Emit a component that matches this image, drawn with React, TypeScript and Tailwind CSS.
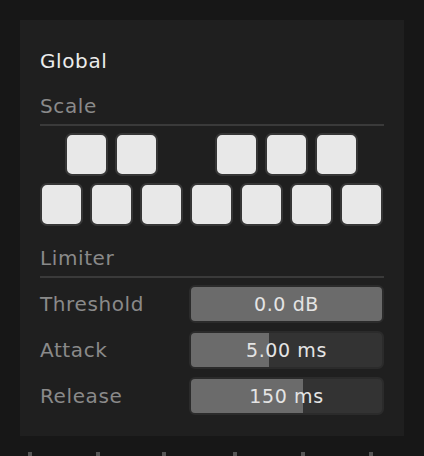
import React from "react"

const font = { fontFamily: '"DejaVu Sans", "Liberation Sans", sans-serif' }

function Key({ hidden }: { hidden?: boolean }) {
  return (
    <div
      className={
        hidden
          ? "w-[43px] h-[43px] shrink-0"
          : "w-[43px] h-[43px] shrink-0 rounded-[7px] border-2 border-[#363636] bg-[#e8e8e8]"
      }
    />
  )
}

function Slider({ label, value, pct }: { label: string; value: string; pct: number }) {
  return (
    <div className="flex items-center h-[38px]">
      <div className="w-[149px] text-[20px] leading-[24px] tracking-[0.6px] text-[#8a8a8a]">{label}</div>
      <div className="relative w-[195px] h-[38px] rounded-[6px] border-2 border-[#2b2b2b] bg-[#333333] overflow-hidden">
        <div className="absolute left-0 top-0 bottom-0 bg-[#6b6b6b]" style={{ width: `${pct}%` }} />
        <div className="relative flex h-full items-center justify-center text-[19px] tracking-[0.6px] text-[#e4e4e4]">
          {value}
        </div>
      </div>
    </div>
  )
}

export default function App() {
  const ticks = [28, 96, 162, 233, 301, 369]
  return (
    <div className="w-[424px] h-[456px] bg-[#171717] pt-[20px] overflow-hidden" style={font}>
      <div className="ml-[20px] w-[384px] h-[416px] bg-[#1f1f1f] px-[20px] pt-[29px]">
        <div className="text-[20px] leading-[24px] tracking-[0.6px] text-[#ececec]">Global</div>
        <div className="mt-[21px] text-[20px] leading-[24px] tracking-[0.6px] text-[#8a8a8a]">Scale</div>
        <div className="mt-[6px] h-[2px] bg-[#3a3a3a]" />
        <div className="mt-[7px] flex gap-[7px] pl-[25px]">
          <Key />
          <Key />
          <Key hidden />
          <Key />
          <Key />
          <Key />
        </div>
        <div className="mt-[7px] flex gap-[7px]">
          {[0, 1, 2, 3, 4, 5, 6].map((i) => (
            <Key key={i} />
          ))}
        </div>
        <div className="mt-[20px] text-[20px] leading-[24px] tracking-[0.6px] text-[#8a8a8a]">Limiter</div>
        <div className="mt-[6px] h-[2px] bg-[#3a3a3a]" />
        <div className="mt-[7px] flex flex-col gap-[8px]">
          <Slider label="Threshold" value="0.0 dB" pct={100} />
          <Slider label="Attack" value="5.00 ms" pct={41} />
          <Slider label="Release" value="150 ms" pct={58.5} />
        </div>
      </div>
      <div className="relative mt-[16px] h-[4px]">
        {ticks.map((x) => (
          <div key={x} className="absolute top-0 w-[4px] h-[4px] bg-[#555555]" style={{ left: x }} />
        ))}
      </div>
    </div>
  )
}
